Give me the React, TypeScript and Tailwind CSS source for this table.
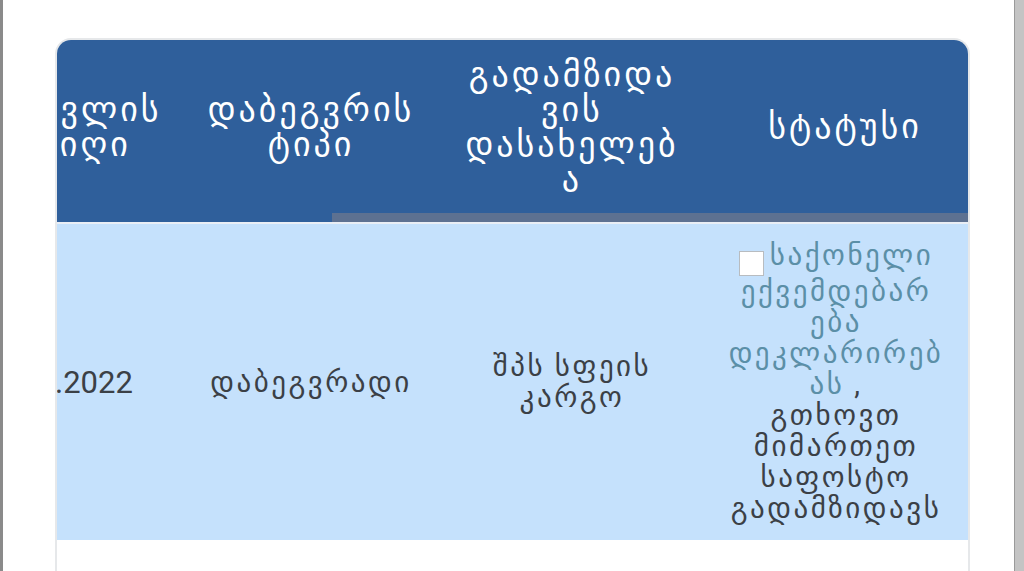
const font = { fontFamily: 'Roboto, "Noto Sans", "DejaVu Sans", sans-serif' };

const headers: string[][] = [
  ["შემოსვლის", "თარიღი"],
  ["დაბეგვრის", "ტიპი"],
  ["გადამზიდა", "ვის", "დასახელებ", "ა"],
  ["სტატუსი"],
];

const Lines = ({ lines }: { lines: string[] }) => (
  <>
    {lines.map((l, i) => (
      <span key={i} className="block whitespace-nowrap">
        {l}
      </span>
    ))}
  </>
);

export default function App() {
  return (
    <div className="relative h-[571px] w-[1024px] overflow-hidden bg-white" style={font}>
      {/* screen edges */}
      <div className="absolute left-0 top-0 h-full w-[3px] bg-[#8a8a8a]" />
      <div className="absolute right-0 top-0 h-full w-[10px] border-l border-[#9a9a9a] bg-[#c4c4c4]" />

      <div className="pl-[55px] pt-[38px]">
        <div className="h-[600px] w-[915px] overflow-hidden rounded-t-[16px] border-2 border-b-0 border-[#e6e8ea]">
          {/* header */}
          <div className="grid h-[173px] grid-cols-[290px_222px_300px_246px] -ml-[147px] bg-[#2f5f9b] text-[34px] leading-[35px] tracking-[3px] text-white">
            {headers.map((h, i) => (
              <div key={i} className="flex flex-col items-center justify-center text-center">
                <Lines lines={h} />
              </div>
            ))}
          </div>
          <div className="flex h-[9px]">
            <div className="w-[275px] bg-[#2f5f9b]" />
            <div className="flex-1 bg-[#5d7191]" />
          </div>
          <div className="h-[2px] bg-[#e9eef5]" />

          {/* data row */}
          <div className="grid h-[316px] grid-cols-[290px_222px_300px_246px] -ml-[147px] bg-[#c5e1fc] text-[29px] leading-[31px] tracking-[2.5px] text-[#3b4046]">
            <div className="flex items-center justify-center text-[31px] tracking-normal">12.05.2022</div>
            <div className="flex items-center justify-center">დაბეგვრადი</div>
            <div className="flex flex-col items-center justify-center text-center">
              <Lines lines={["შპს სფეის", "კარგო"]} />
            </div>
            <div className="flex flex-col items-center justify-center pr-[18px] text-center">
              <span className="flex items-start whitespace-nowrap text-[#5b8fa7]">
                <span className="mr-[6px] mt-[11px] inline-block h-[25px] w-[25px] shrink-0 border border-[#b8bcc0] bg-white" />
                საქონელი
              </span>
              <span className="block whitespace-nowrap text-[#5b8fa7]">ექვემდებარ</span>
              <span className="block text-[#5b8fa7]">ება</span>
              <span className="block whitespace-nowrap text-[#5b8fa7]">დეკლარირებ</span>
              <span className="block">
                <span className="text-[#5b8fa7]">ას </span>,
              </span>
              <Lines lines={["გთხოვთ", "მიმართეთ", "საფოსტო", "გადამზიდავს"]} />
            </div>
          </div>
        </div>
      </div>
    </div>
  );
}
